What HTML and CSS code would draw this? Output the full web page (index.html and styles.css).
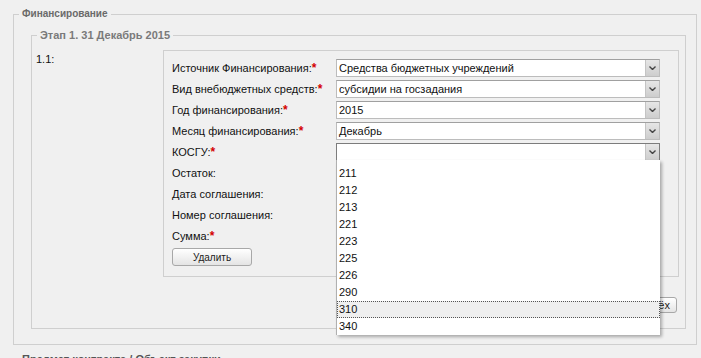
FILE: index.html
```html
<!DOCTYPE html>
<html lang="ru">
<head>
    <meta charset="UTF-8">
    <title>Финансирование</title>
    <link rel="stylesheet" href="styles.css">
</head>
<body>
    <fieldset class="section">
        <legend>Финансирование</legend>
        <fieldset class="stage">
            <legend>Этап 1. 31 Декабрь 2015</legend>
            <div class="stage-body">
                <div class="num">1.1:</div>
                <div class="source-box">
                    <div class="row">
                        <label>Источник Финансирования:<span class="req">*</span></label>
                        <div class="select"><span class="value">Средства бюджетных учреждений</span><span class="arrow"><svg width="7" height="4" viewBox="0 0 7 4"><path d="M0.5 0.5 L3.5 3.5 L6.5 0.5" fill="none" stroke="#444" stroke-width="1.4"/></svg></span></div>
                    </div>
                    <div class="row">
                        <label>Вид внебюджетных средств:<span class="req">*</span></label>
                        <div class="select"><span class="value">субсидии на госзадания</span><span class="arrow"><svg width="7" height="4" viewBox="0 0 7 4"><path d="M0.5 0.5 L3.5 3.5 L6.5 0.5" fill="none" stroke="#444" stroke-width="1.4"/></svg></span></div>
                    </div>
                    <div class="row">
                        <label>Год финансирования:<span class="req">*</span></label>
                        <div class="select"><span class="value">2015</span><span class="arrow"><svg width="7" height="4" viewBox="0 0 7 4"><path d="M0.5 0.5 L3.5 3.5 L6.5 0.5" fill="none" stroke="#444" stroke-width="1.4"/></svg></span></div>
                    </div>
                    <div class="row">
                        <label>Месяц финансирования:<span class="req">*</span></label>
                        <div class="select"><span class="value">Декабрь</span><span class="arrow"><svg width="7" height="4" viewBox="0 0 7 4"><path d="M0.5 0.5 L3.5 3.5 L6.5 0.5" fill="none" stroke="#444" stroke-width="1.4"/></svg></span></div>
                    </div>
                    <div class="row">
                        <label>КОСГУ:<span class="req">*</span></label>
                        <div class="select focused">
                            <span class="value"></span><span class="arrow"><svg width="7" height="4" viewBox="0 0 7 4"><path d="M0.5 0.5 L3.5 3.5 L6.5 0.5" fill="none" stroke="#444" stroke-width="1.4"/></svg></span>
                            <ul class="dropdown">
                                <li>211</li>
                                <li>212</li>
                                <li>213</li>
                                <li>221</li>
                                <li>223</li>
                                <li>225</li>
                                <li>226</li>
                                <li>290</li>
                                <li class="hover">310</li>
                                <li>340</li>
                            </ul>
                        </div>
                    </div>
                    <div class="row">
                        <label>Остаток:</label>
                        <div class="field"></div>
                    </div>
                    <div class="row">
                        <label>Дата соглашения:</label>
                        <div class="field"></div>
                    </div>
                    <div class="row">
                        <label>Номер соглашения:</label>
                        <div class="field"></div>
                    </div>
                    <div class="row">
                        <label>Сумма:<span class="req">*</span></label>
                        <div class="field"></div>
                    </div>
                    <button class="btn btn-delete">Удалить</button>
                </div>
            </div>
            <div class="stage-actions">
                <button class="btn btn-more">Добавить ещё всёх</button>
            </div>
        </fieldset>
    </fieldset>
    <fieldset class="section section-next">
        <legend>Предмет контракта / Объект закупки</legend>
    </fieldset>
</body>
</html>
```

FILE: styles.css
```css
body {
    margin: 0;
    background-color: #f0f0f0;
    font-family: "Liberation Sans", Arial, sans-serif;
    font-size: 11px;
    color: #111;
    overflow: hidden;
}
.section {
    margin: 8px 4px 0 13px;
    padding: 0 0 15px 0;
    border: 1px solid #cfcfcf;
}
.section > legend {
    margin-left: 5px;
    padding: 0 3px;
    font-size: 10px;
    line-height: 12px;
    font-weight: bold;
    color: #6a6a6a;
}
.section-next {
    margin-top: 8px;
}
.section-next > legend {
    font-size: 11px;
    color: #555;
}
.stage {
    margin: 8px 10px 0 17px;
    padding: 0 8px 15px 0;
    border: 1px solid #cfcfcf;
}
.stage > legend {
    margin-left: 5px;
    padding: 0 3px;
    font-size: 11px;
    line-height: 14px;
    font-weight: bold;
    color: #7a7a7a;
}
.stage-body {
    display: flex;
    margin-top: 8px;
}
.num {
    width: 127px;
    padding: 2px 0 0 4px;
    line-height: 14px;
}
.source-box {
    flex: 1;
    margin-right: -2px;
    padding: 8px 8px 10px 8px;
    border: 1px solid #cfcfcf;
}
.row {
    display: flex;
    height: 18px;
    margin-bottom: 3px;
}
.row label {
    width: 164px;
    line-height: 18px;
}
.req {
    color: #d40000;
    font-weight: bold;
    font-size: 12px;
}
.select {
    position: relative;
    display: flex;
    width: 324px;
    height: 18px;
    box-sizing: border-box;
    background: #fff;
    border: 1px solid #bcbcbc;
    border-top-color: #a0a0a0;
}
.select.focused {
    border-color: #7c7c7c;
}
.select .value {
    flex: 1;
    padding-left: 2px;
    line-height: 16px;
}
.select .arrow {
    display: flex;
    align-items: center;
    justify-content: center;
    width: 13px;
    border-left: 1px solid #c4c4c4;
    background: linear-gradient(#e6e6e6, #cdcdcd);
}
.field {
    width: 324px;
    height: 18px;
}
.dropdown {
    position: absolute;
    top: 100%;
    left: -1px;
    z-index: 10;
    width: 324px;
    box-sizing: border-box;
    margin: 0;
    padding: 5px 0 0 0;
    list-style: none;
    background: #fff;
    border-left: 1px solid #b0b0b0;
    box-shadow: 2px 2px 3px rgba(0, 0, 0, 0.3);
}
.dropdown li {
    height: 17px;
    line-height: 17px;
    padding-left: 2px;
}
.dropdown li.hover {
    background: #efefef;
    outline: 1px dotted #555;
    outline-offset: -1px;
}
.btn {
    height: 18px;
    padding: 0;
    font-family: "Liberation Sans", Arial, sans-serif;
    font-size: 10px;
    color: #222;
    background: linear-gradient(#ffffff, #e4e4e4);
    border: 1px solid #a8a8a8;
    border-radius: 3px;
}
.btn-delete {
    width: 80px;
}
.stage-actions {
    display: flex;
    justify-content: flex-end;
    margin-top: 20px;
}
.btn-more {
    height: 16px;
    padding: 0 6px;
    font-size: 11px;
}
```
